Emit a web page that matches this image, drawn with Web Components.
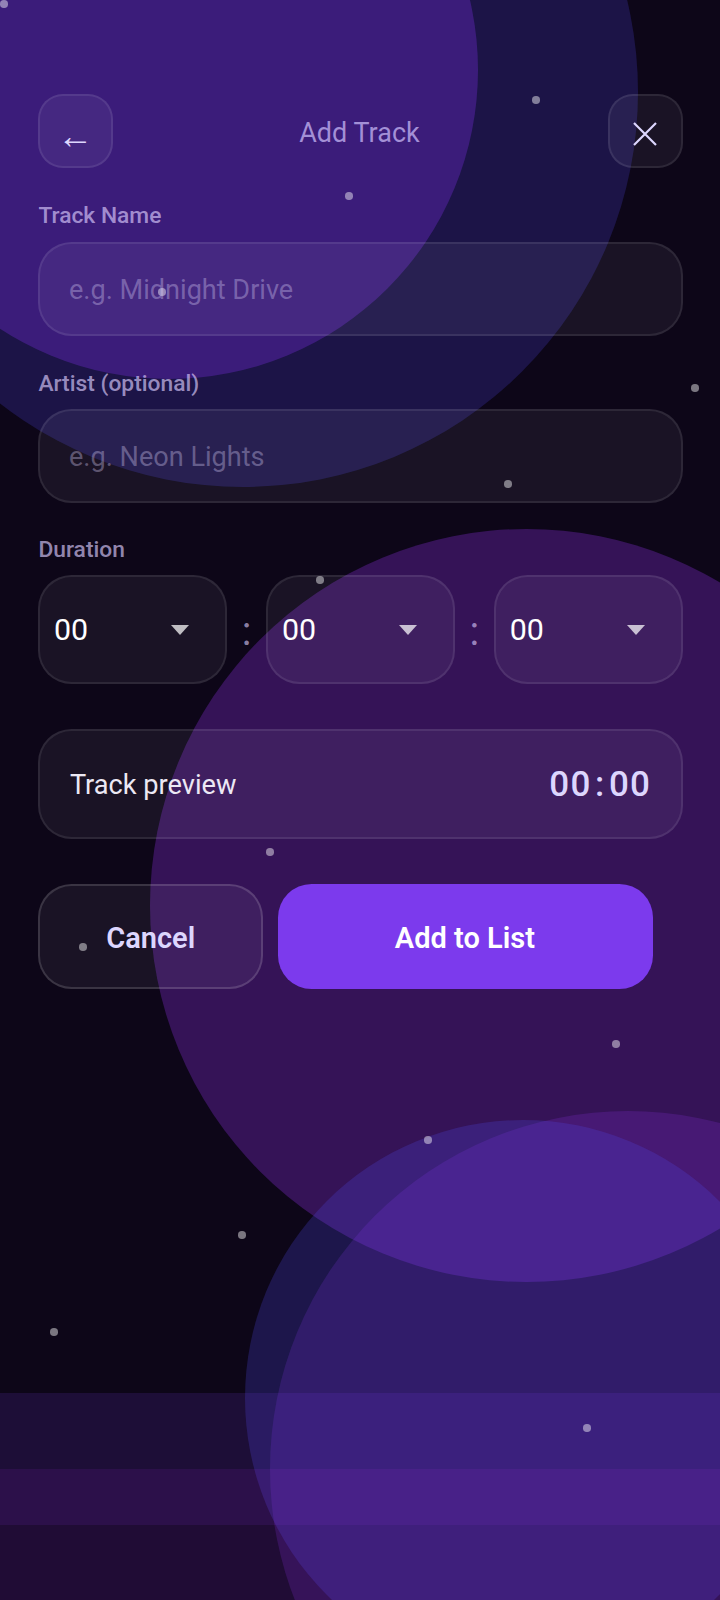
<!DOCTYPE html>
<html lang="en">
<head>
<meta charset="utf-8">
<title>Add Track</title>
<style>
  html, body { margin: 0; padding: 0; background: #0d0618; }
  body { font-family: Roboto, "Liberation Sans", sans-serif; }
</style>
</head>
<body>
<add-track-screen>
  <night-backdrop slot="backdrop"></night-backdrop>
  <screen-header>Add Track</screen-header>
  <text-field label="Track Name">e.g. Midnight Drive</text-field>
  <text-field label="Artist (optional)">e.g. Neon Lights</text-field>
  <duration-field label="Duration"></duration-field>
  <track-preview>Track preview</track-preview>
  <action-row>
    <action-button kind="ghost">Cancel</action-button>
    <action-button kind="primary">Add to List</action-button>
  </action-row>
</add-track-screen>
<script>
function define(name, css, html) {
  customElements.define(name, class extends HTMLElement {
    constructor() {
      super();
      const root = this.attachShadow({ mode: 'open' });
      const t = document.createElement('template');
      t.innerHTML = '<style>' + css + '</style>' + (typeof html === 'function' ? '' : html);
      root.appendChild(t.content);
    }
    connectedCallback() {
      if (typeof html === 'function' && !this.shadowRoot.querySelector('[data-r]')) {
        const t = document.createElement('template');
        t.innerHTML = html(this);
        this.shadowRoot.appendChild(t.content);
      }
    }
  });
}

const glass = `background: rgba(240,240,255,.058); border: 2px solid rgba(255,255,255,.085);`;

define('add-track-screen', `
  :host { display: block; position: relative; width: 720px; height: 1600px; overflow: hidden; background: #0d0618; color: #fff; box-sizing: border-box; }
  .content { position: relative; z-index: 1; box-sizing: border-box; height: 100%; padding: 94px 37.4px 0 38.4px; display: flex; flex-direction: column; gap: 33.6px; }
`, `<slot name="backdrop"></slot><div class="content"><slot></slot></div>`);

const stars = [[4,4],[536,100],[349,196],[162,292],[695,388],[508,484],[320,580],[270,852],[83,947],[616,1044],[428,1140],[242,1235],[54,1332],[587,1428]];
define('night-backdrop', `
  :host { display: block; position: absolute; inset: 0; z-index: 0; }
  .c { position: absolute; border-radius: 50%; }
  .band { position: absolute; left: 0; right: 0; }
  .s { position: absolute; width: 7.5px; height: 7.5px; margin: -3.75px 0 0 -3.75px; border-radius: 50%; background: rgba(255,255,255,.45); z-index: 5; }
`, (() => {
  const circ = (cx, cy, r, col) => `<div class="c" style="left:${cx-r}px;top:${cy-r}px;width:${2*r}px;height:${2*r}px;background:${col}"></div>`;
  return circ(243,92,395,'rgba(79,70,229,.23)') +
    circ(169,70,309,'rgba(130,50,237,.31)') +
    circ(526.5,905,376.5,'rgba(147,51,234,.3)') +
    circ(628,1469,358,'rgba(147,51,234,.2)') +
    circ(523,1398,278,'rgba(79,70,229,.25)') +
    `<div class="band" style="top:1393px;height:76px;background:rgba(124,58,237,.15)"></div>` +
    `<div class="band" style="top:1469px;height:56px;background:rgba(147,51,234,.24)"></div>` +
    `<div class="band" style="top:1525px;height:75px;background:rgba(147,51,234,.14)"></div>` +
    stars.map(([x,y]) => `<div class="s" style="left:${x}px;top:${y}px"></div>`).join('');
})());

define('icon-button', `
  :host { display: flex; align-items: center; justify-content: center; box-sizing: border-box; width: 75px; height: 74.4px; border-radius: 25px; ${glass} color: #ddd6fe; flex: none; }
`, `<slot></slot>`);

define('screen-header', `
  :host { display: flex; align-items: center; justify-content: space-between; height: 74.4px; }
  .t { font-size: 27px; color: rgba(205,190,250,.72); line-height: 1; padding-top: 4px; margin-right: 2px; }
  .a { display: block; font: 400 36px "Liberation Sans", sans-serif; line-height: 1; padding-top: 9px; margin-left: -1px; }
  svg { display: block; margin-top: 5px; }
`, `<icon-button><span class="a">←</span></icon-button><div class="t"><slot></slot></div><icon-button><svg width="26" height="26" viewBox="0 0 26 26"><path d="M2 2 L24 24 M24 2 L2 24" stroke="#ddd6fe" stroke-width="2.2" fill="none"/></svg></icon-button>`);

const labelCss = `.l { display: block; font-size: 22.8px; line-height: 28px; padding-top: .5px; font-weight: 500; color: rgba(215,200,250,.68); }`;

define('text-field', labelCss + `
  :host { display: block; }
  .l { margin-bottom: 11.5px; }
  .box { box-sizing: border-box; height: 93.6px; border-radius: 33.6px; ${glass} padding: 2px 28.6px 0; display: flex; align-items: center; font-size: 27.1px; color: rgba(220,210,250,.36); }
`, (el) => `<span class="l" data-r>${el.getAttribute('label')}</span><div class="box"><slot></slot></div>`);

define('time-select', `
  :host { display: flex; align-items: center; justify-content: space-between; box-sizing: border-box; width: 188.4px; height: 109px; flex: none; border-radius: 33.6px; ${glass} padding: 0 35.4px 0 13.6px; font-size: 30.4px; color: #fff; }
  i { display: block; width: 0; height: 0; border-left: 9.2px solid transparent; border-right: 9.2px solid transparent; border-top: 10px solid rgba(255,255,255,.72); }
`, `<slot></slot><i></i>`);

define('duration-field', labelCss + `
  :host { display: block; }
  .l { margin-top: -1px; margin-bottom: 11.3px; }
  .row { display: flex; align-items: center; justify-content: space-between; }
  .sep { width: 39.5px; text-align: center; font-size: 40px; line-height: 1; padding-top: 4px; color: rgba(221,205,254,.62); flex: none; }
`, (el) => `<span class="l" data-r>${el.getAttribute('label')}</span><div class="row"><time-select>00</time-select><span class="sep">:</span><time-select>00</time-select><span class="sep">:</span><time-select>00</time-select></div>`);

define('track-preview', `
  :host { display: flex; align-items: center; justify-content: space-between; box-sizing: border-box; height: 110px; margin-top: 11px; border-radius: 33.6px; ${glass} padding: 2px 29.5px 0; font-size: 27.2px; color: #ece8f4; }
  .v { font-size: 35px; font-weight: 500; color: #ddd6fe; letter-spacing: 1.2px; line-height: 1; }
  .v b { font-weight: 500; margin: 0 3.5px; }
`, `<slot></slot><span class="v">00<b>:</b>00</span>`);

define('action-row', `
  :host { display: flex; gap: 15.4px; margin-top: 11.4px; }
`, `<slot></slot>`);

define('action-button', `
  :host { display: flex; align-items: center; justify-content: center; box-sizing: border-box; height: 105.4px; padding-top: 4px; border-radius: 33.6px; font-size: 29px; font-weight: 600; flex: none; }
  :host([kind=ghost]) { width: 224.6px; background: rgba(240,240,255,.058); border: 2px solid rgba(255,255,255,.14); color: #ddd6fe; }
  :host([kind=primary]) { width: 375px; padding-right: 2px; background: #7c3aed; color: #fff; }
`, `<slot></slot>`);
</script>
</body>
</html>
